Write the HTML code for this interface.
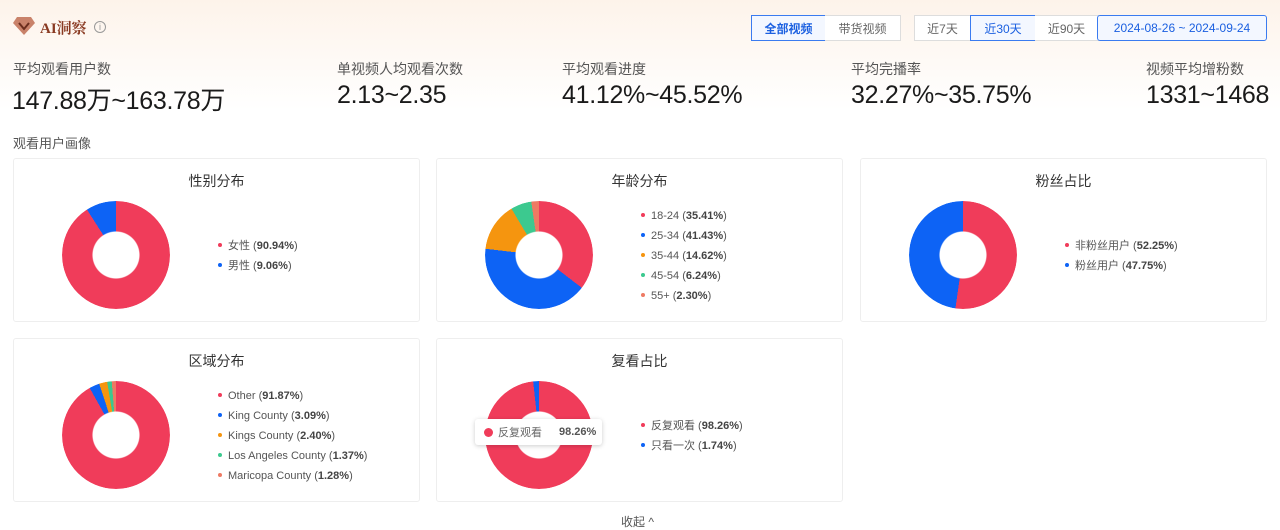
<!DOCTYPE html><html><head><meta charset="utf-8"><style>
*{box-sizing:border-box;margin:0;padding:0}
html{background:#fff}
body{width:1280px;height:526px;overflow:hidden;font-family:"Liberation Sans","Noto Sans CJK SC",sans-serif;background:linear-gradient(#fdf3ea 0,#fff 110px) no-repeat;color:#222;position:relative}
.abs{position:absolute}
.btn{position:absolute;top:15px;height:26px;border:1px solid #ddd;font-size:12px;color:#666;display:flex;align-items:center;justify-content:center;background:#fff}
.on{border-color:#3a7bf0;color:#1a5fe0;background:#f3f7ff;font-weight:bold}
.lab{position:absolute;top:59px;font-size:14px;color:#555}
.val{position:absolute;top:81px;font-size:25px;letter-spacing:-0.3px;color:#1a1a1a}
.card{position:absolute;width:407px;height:164px;border:1px solid #eee;border-radius:3px;background:#fff}
.card h3{position:absolute;top:12px;width:100%;text-align:center;font-size:14px;font-weight:normal;color:#333}
.pie{position:absolute;left:48px;top:42px;width:108px;height:108px;border-radius:50%;-webkit-mask:radial-gradient(circle,transparent 23px,#000 24px);mask:radial-gradient(circle,transparent 23px,#000 24px)}
.leg{position:absolute;left:204px;font-size:11px;color:#555;line-height:20px}
.leg b{font-weight:bold;color:#444}
.d{display:inline-block;width:4px;height:4px;border-radius:50%;margin-right:6px;vertical-align:middle;position:relative;top:-1px}
</style></head><body>
<svg class="abs" style="left:13px;top:16px" width="22" height="20" viewBox="0 0 22 20"><path d="M4 1h14l4 6-11 12L0 7z" fill="#c9826a"/><path d="M6 7l5 6 5-6" stroke="#6b2d1d" stroke-width="2" fill="none"/></svg>
<div class="abs" style="left:40px;top:17px;font-size:15px;font-weight:bold;color:#8a3a22;font-family:'Liberation Serif','Noto Serif CJK SC',serif">AI洞察</div>
<div class="abs" style="left:94px;top:21px;width:12px;height:12px;border:1px solid #999;border-radius:50%;font-size:9px;color:#999;text-align:center;line-height:10px">i</div>
<div class="btn on" style="left:751px;width:75px">全部视频</div>
<div class="btn" style="left:825px;width:76px;border-left:none">带货视频</div>
<div class="btn" style="left:914px;width:57px">近7天</div>
<div class="btn on" style="left:970px;width:66px;font-weight:normal">近30天</div>
<div class="btn" style="left:1035px;width:64px;border-left:none">近90天</div>
<div class="btn on" style="left:1097px;width:170px;font-weight:normal;border-radius:3px">2024-08-26 ~ 2024-09-24</div>
<div class="lab" style="left:13px">平均观看用户数</div><div class="val" style="left:12px">147.88万~163.78万</div>
<div class="lab" style="left:337px">单视频人均观看次数</div><div class="val" style="left:337px">2.13~2.35</div>
<div class="lab" style="left:562px">平均观看进度</div><div class="val" style="left:562px">41.12%~45.52%</div>
<div class="lab" style="left:851px">平均完播率</div><div class="val" style="left:851px">32.27%~35.75%</div>
<div class="lab" style="left:1146px">视频平均增粉数</div><div class="val" style="left:1146px">1331~1468</div>
<div class="abs" style="left:13px;top:133px;font-size:13px;color:#555">观看用户画像</div>

<div class="card" style="left:13px;top:158px"><h3>性别分布</h3>
<div class="pie" style="background:conic-gradient(#f03c5a 0 90.94%,#0d63f5 0)"></div>
<div class="leg" style="top:77px"><div><span class="d" style="background:#f03c5a"></span>女性 (<b>90.94%</b>)</div><div><span class="d" style="background:#0d63f5"></span>男性 (<b>9.06%</b>)</div></div></div>

<div class="card" style="left:436px;top:158px"><h3>年龄分布</h3>
<div class="pie" style="background:conic-gradient(#f03c5a 0 35.41%,#0d63f5 0 76.84%,#f5950f 0 91.46%,#3cc98f 0 97.7%,#ee7a63 0)"></div>
<div class="leg" style="top:47px"><div><span class="d" style="background:#f03c5a"></span>18-24 (<b>35.41%</b>)</div><div><span class="d" style="background:#0d63f5"></span>25-34 (<b>41.43%</b>)</div><div><span class="d" style="background:#f5950f"></span>35-44 (<b>14.62%</b>)</div><div><span class="d" style="background:#3cc98f"></span>45-54 (<b>6.24%</b>)</div><div><span class="d" style="background:#ee7a63"></span>55+ (<b>2.30%</b>)</div></div></div>

<div class="card" style="left:860px;top:158px"><h3>粉丝占比</h3>
<div class="pie" style="background:conic-gradient(#f03c5a 0 52.25%,#0d63f5 0)"></div>
<div class="leg" style="top:77px"><div><span class="d" style="background:#f03c5a"></span>非粉丝用户 (<b>52.25%</b>)</div><div><span class="d" style="background:#0d63f5"></span>粉丝用户 (<b>47.75%</b>)</div></div></div>

<div class="card" style="left:13px;top:338px"><h3>区域分布</h3>
<div class="pie" style="background:conic-gradient(#f03c5a 0 91.87%,#0d63f5 0 94.96%,#f5950f 0 97.36%,#3cc98f 0 98.73%,#ee7a63 0)"></div>
<div class="leg" style="top:47px"><div><span class="d" style="background:#f03c5a"></span>Other (<b>91.87%</b>)</div><div><span class="d" style="background:#0d63f5"></span>King County (<b>3.09%</b>)</div><div><span class="d" style="background:#f5950f"></span>Kings County (<b>2.40%</b>)</div><div><span class="d" style="background:#3cc98f"></span>Los Angeles County (<b>1.37%</b>)</div><div><span class="d" style="background:#ee7a63"></span>Maricopa County (<b>1.28%</b>)</div></div></div>

<div class="card" style="left:436px;top:338px"><h3>复看占比</h3>
<div class="pie" style="background:conic-gradient(#f03c5a 0 98.26%,#0d63f5 0)"></div>
<div class="leg" style="top:77px"><div><span class="d" style="background:#f03c5a"></span>反复观看 (<b>98.26%</b>)</div><div><span class="d" style="background:#0d63f5"></span>只看一次 (<b>1.74%</b>)</div></div>
<div class="abs" style="left:38px;top:80px;width:127px;height:26px;background:#fff;border-radius:3px;box-shadow:0 1px 5px rgba(0,0,0,.2);font-size:11px;color:#666;display:flex;align-items:center;padding-left:9px"><span style="width:9px;height:9px;border-radius:50%;background:#f03c5a;margin-right:5px"></span>反复观看<b style="margin-left:17px;color:#555">98.26%</b></div></div>

<div class="abs" style="left:621px;top:513px;font-size:12px;color:#555">收起 ^</div>
</body></html>
